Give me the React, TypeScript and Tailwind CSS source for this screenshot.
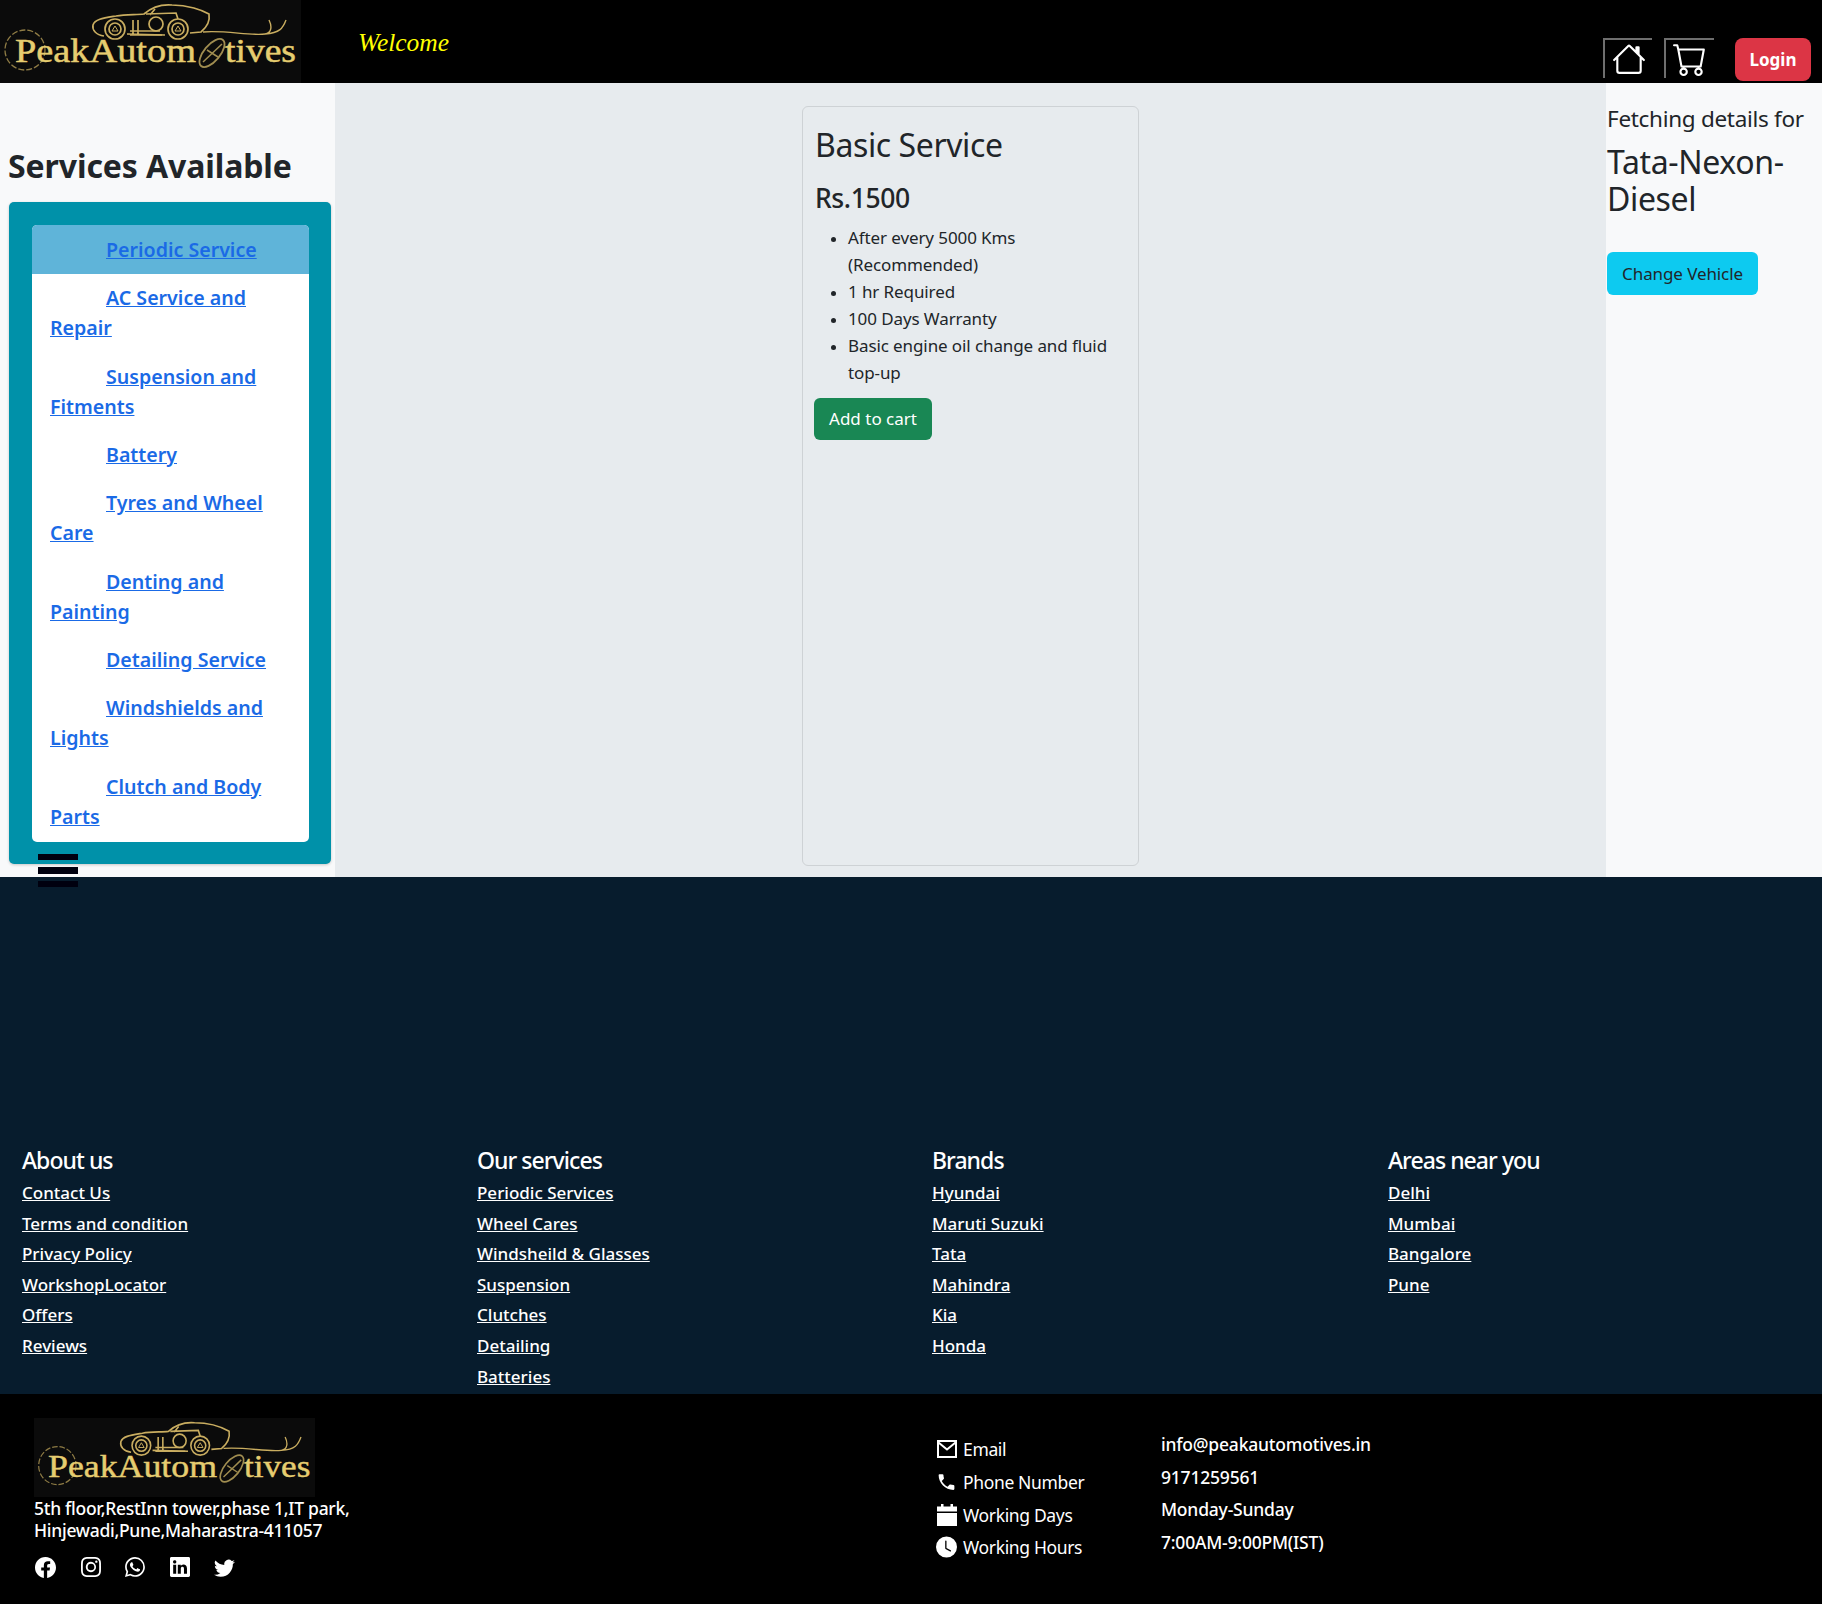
import React from "react";
import { BsHouse, BsCart, BsFacebook, BsInstagram, BsWhatsapp, BsLinkedin, BsTwitter, BsClockFill } from "react-icons/bs";
import { MdLocalPhone } from "react-icons/md";

const sans = "[font-family:'Noto_Sans',sans-serif]";

function Logo({ className }: { className: string }) {
  const gold = "#c9ad60";
  return (
    <svg viewBox="0 0 301 83" preserveAspectRatio="none" className={className}>
      <rect width="301" height="83" fill="#0b0b0b" />
      <g fill="none" stroke={gold} strokeWidth="1.7">
        <path d="M104 36 C96 35 92 30 93 25 C95 19 104 18 116 16 C126 14 136 15 144 14 C152 7 160 4 172 5 C188 5 202 10 209 14 C210 20 207 27 201 32 L190 33" />
        <path d="M127 34 L165 35 M146 14 L176 13 L178 19 M155 9 L150 15 M133 20 L133 34 M138 20 L138 34" />
        <circle cx="115" cy="29" r="10" />
        <circle cx="115" cy="29" r="6" />
        <circle cx="178" cy="29" r="10" />
        <circle cx="178" cy="29" r="6" />
        <circle cx="156" cy="24" r="7" />
        <path d="M130 31 H160 M130 35 H162" />
        <path d="M203 32 C225 30 250 36 265 34 C272 33 272 26 269 20 M265 34 C280 33 283 28 286 20" strokeWidth="1.4" />
        <path d="M115 26 l3 5 h-6 z M178 26 l3 5 h-6 z" strokeWidth="1" />
        <circle cx="25" cy="50" r="20" strokeDasharray="6 2" strokeWidth="1.3" stroke="#8f7c45" />
        <ellipse cx="212" cy="53" rx="8" ry="17" transform="rotate(40 212 53)" stroke="#a08d50" strokeWidth="1.8" />
        <path d="M203 62 L222 44 M207 50 L218 57" stroke="#a08d50" strokeWidth="1.5" />
      </g>
      <text x="15" y="62" fontFamily="'Liberation Serif',serif" fontSize="34" fill="#e6cd70" stroke="#e6cd70" strokeWidth="0.5" textLength="181" lengthAdjust="spacingAndGlyphs">PeakAutom</text>
      <text x="225" y="62" fontFamily="'Liberation Serif',serif" fontSize="34" fill="#e6cd70" stroke="#e6cd70" strokeWidth="0.5" textLength="71" lengthAdjust="spacingAndGlyphs">tives</text>
    </svg>
  );
}

function Header() {
  return (
    <header className="flex h-[83px] items-start bg-black">
      <Logo className="h-[83px] w-[301px] shrink-0" />
      <div className="ml-[57px] mt-[25px] [font-family:'Liberation_Serif',serif] text-[25.5px] leading-[36px] italic text-[#ffff00]">Welcome</div>
      <div className="ml-auto mr-[11px] mt-[38px] flex items-start">
        <button className="flex h-[40px] w-[49px] items-center justify-center border-l-2 border-t-2 border-[#6e6e6e] text-white">
          <BsHouse size={34} />
        </button>
        <button className="ml-[12px] flex h-[40px] w-[50px] items-center justify-center border-l-2 border-t-2 border-[#6e6e6e] text-white">
          <BsCart size={34} />
        </button>
        <button className={`ml-[21px] h-[43px] w-[76px] rounded-lg bg-[#dc3545] text-[17px] font-bold text-white ${sans}`}>Login</button>
      </div>
    </header>
  );
}

const services: string[] = [
  "Periodic Service",
  "AC Service and Repair",
  "Suspension and Fitments",
  "Battery",
  "Tyres and Wheel Care",
  "Denting and Painting",
  "Detailing Service",
  "Windshields and Lights",
  "Clutch and Body Parts",
];

function Sidebar() {
  return (
    <aside className="relative w-[335px] shrink-0 bg-[#f8f9fa] pl-[9px] pt-[62px]">
      <h2 className="-ml-[1px] text-[32px] leading-[42px] font-bold tracking-[-0.1px] text-[#212529]">Services Available</h2>
      <div className="mt-[15px] h-[662px] w-[322px] rounded-[5px] bg-[#0091a9] pl-[23px] pt-[23px] shadow-[0_1px_3px_rgba(0,0,0,0.2)]">
        <ul className="w-[277px] overflow-hidden rounded-[5px] bg-white pb-[1px]">
          {services.map((s, i) => (
            <li key={s} className={`pb-[9px] pl-[18px] pr-[20px] indent-[56px] text-[19.6px] leading-[30.2px] font-semibold ${i === 0 ? "bg-[#5fb4d9] pt-[10px]" : "pt-[9px]"}`}>
              <a href="#" className="text-[#1a6ae6] underline">{s}</a>
            </li>
          ))}
        </ul>
      </div>
      <div className="absolute left-[38px] top-[771px] flex w-[40px] flex-col gap-[7px]">
        <span className="h-[6px] bg-[#00000f]" />
        <span className="h-[7px] bg-[#00000f]" />
        <span className="h-[6px] bg-[#00000f]" />
      </div>
    </aside>
  );
}

function Card() {
  return (
    <div className="mt-[23px] ml-[467px] h-[760px] w-[337px] rounded-[6px] border border-[#ced2d5] px-[12px] pt-[16px] text-[#212529]">
      <h3 className="text-[32px] leading-[44px] tracking-[-0.4px]">Basic Service</h3>
      <h4 className="mt-[13px] text-[26.5px] leading-[36px] font-medium tracking-[-0.4px]">Rs.1500</h4>
      <ul className="mt-[8px] list-disc pl-[33px] text-[17px] leading-[27px] tracking-[-0.1px] marker:text-[15px]">
        <li>After every 5000 Kms (Recommended)</li>
        <li>1 hr Required</li>
        <li>100 Days Warranty</li>
        <li>Basic engine oil change and fluid top-up</li>
      </ul>
      <button className="-ml-[1px] mt-[12px] h-[42px] w-[118px] rounded-[6px] bg-[#198754] text-[17px] text-white">Add to cart</button>
    </div>
  );
}

function RightPanel() {
  return (
    <aside className="ml-auto w-[216px] shrink-0 bg-[#f8f9fa] pl-[1px] pt-[19px] text-[#212529]">
      <p className="text-[22.5px] leading-[34px] tracking-[-0.3px]">Fetching details for</p>
      <h3 className="mt-[7px] text-[32px] leading-[37px] tracking-[-0.35px]">Tata-Nexon-Diesel</h3>
      <button className="mt-[35px] h-[43px] w-[151px] rounded-[6px] bg-[#0dcaf0] text-[17px] tracking-[-0.1px]">Change Vehicle</button>
    </aside>
  );
}

const columns: { title: string; links: string[] }[] = [
  { title: "About us", links: ["Contact Us", "Terms and condition", "Privacy Policy", "WorkshopLocator", "Offers", "Reviews"] },
  { title: "Our services", links: ["Periodic Services", "Wheel Cares", "Windsheild & Glasses", "Suspension", "Clutches", "Detailing", "Batteries"] },
  { title: "Brands", links: ["Hyundai", "Maruti Suzuki", "Tata", "Mahindra", "Kia", "Honda"] },
  { title: "Areas near you", links: ["Delhi", "Mumbai", "Bangalore", "Pune"] },
];

function FooterLinks() {
  return (
    <section className="grid h-[517px] grid-cols-[455px_455px_456px_1fr] content-end bg-[#071c2d] pl-[22px] text-white">
      {columns.map((c) => (
        <div key={c.title} className="h-[250px]">
          <h5 className="text-[23px] leading-[32px] font-medium tracking-[-0.95px]">{c.title}</h5>
          <ul className="mt-[2px]">
            {c.links.map((l) => (
              <li key={l} className="h-[30.6px] text-[17px] leading-[30.6px] font-medium">
                <a href="#" className="underline">{l}</a>
              </li>
            ))}
          </ul>
        </div>
      ))}
    </section>
  );
}

function MailIcon() {
  return (
    <svg width="20" height="18" viewBox="0 0 20 18" fill="none" stroke="white" strokeWidth="2">
      <rect x="1" y="1" width="18" height="16" />
      <path d="M1.5 2.5 L10 9.5 L18.5 2.5" />
    </svg>
  );
}

function CalendarIcon() {
  return (
    <svg width="20" height="22" viewBox="0 0 20 22" fill="white">
      <rect x="4" y="0" width="2.5" height="4" />
      <rect x="13.5" y="0" width="2.5" height="4" />
      <rect x="0" y="2.5" width="20" height="5" />
      <rect x="0" y="9" width="20" height="13" />
    </svg>
  );
}

const contacts = [
  { icon: <MailIcon />, label: "Email", value: "info@peakautomotives.in" },
  { icon: <MdLocalPhone size={24} />, label: "Phone Number", value: "9171259561" },
  { icon: <CalendarIcon />, label: "Working Days", value: "Monday-Sunday" },
  { icon: <BsClockFill size={22} />, label: "Working Hours", value: "7:00AM-9:00PM(IST)" },
];

function FooterBottom() {
  return (
    <section className="flex h-[210px] bg-black text-white">
      <div className="w-[936px] shrink-0 pl-[34px] pt-[24px]">
        <Logo className="h-[79px] w-[281px]" />
        <p className="text-[17.5px] leading-[22px] font-medium tracking-[-0.28px]">
          5th floor,RestInn tower,phase 1,IT park,
          <br />
          Hinjewadi,Pune,Maharastra-411057
        </p>
        <div className="mt-[16px] flex gap-[24.5px] pl-[1px] text-white">
          <BsFacebook size={21} />
          <BsInstagram size={20} />
          <BsWhatsapp size={20} />
          <BsLinkedin size={20} />
          <BsTwitter size={21} />
        </div>
      </div>
      <div className="w-[225px] shrink-0 pt-[39px]">
        {contacts.map((c) => (
          <div key={c.label} className="flex h-[32.7px] items-center text-[17.5px] tracking-[-0.35px]">
            <span className="flex w-[27px] shrink-0 justify-center pr-[6px]">{c.icon}</span>
            {c.label}
          </div>
        ))}
      </div>
      <div className="pt-[34px]">
        {contacts.map((c) => (
          <div key={c.value} className="flex h-[32.6px] items-center text-[17.5px] font-medium tracking-[-0.2px]">{c.value}</div>
        ))}
      </div>
    </section>
  );
}

export default function App() {
  return (
    <div className={`w-[1822px] overflow-hidden ${sans}`}>
      <Header />
      <main className="flex h-[794px] bg-[#e7ebee]">
        <Sidebar />
        <Card />
        <RightPanel />
      </main>
      <FooterLinks />
      <FooterBottom />
    </div>
  );
}
